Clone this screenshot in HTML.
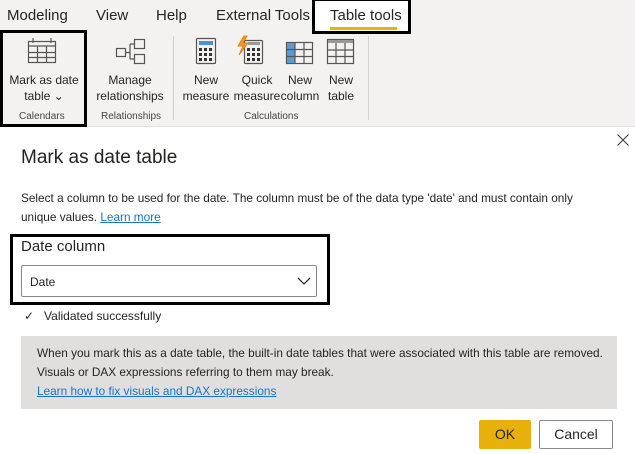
<!DOCTYPE html><html><head><style>
body{margin:0;width:635px;height:454px;position:relative;overflow:hidden;background:#fff;font-family:"Liberation Sans",sans-serif;color:#252423}
.a{position:absolute;white-space:nowrap}
.rib{position:absolute;left:0;top:0;width:635px;height:126px;background:#f3f2f1;border-bottom:1px solid #e1dfdd}
.tab{font-size:15px;top:7px;color:#252423}
.lbl{font-size:12px;text-align:center;line-height:16px}
.grp{font-size:10px;color:#444;top:111px}
</style></head><body>
<div class="rib"></div>
<div class="a tab" style="left:7px">Modeling</div>
<div class="a tab" style="left:96px">View</div>
<div class="a tab" style="left:156px">Help</div>
<div class="a tab" style="left:216px">External Tools</div>
<div class="a" style="left:312px;top:-2px;width:99px;height:36px;border:3px solid #000;background:#fff;box-sizing:border-box"></div>
<div class="a tab" style="left:330px">Table tools</div>
<div class="a" style="left:330px;top:27px;width:67px;height:3px;background:#e8b00a"></div>
<div class="a" style="left:0;top:30px;width:87px;height:97px;border:3px solid #000;box-sizing:border-box"></div>
<div class="a" style="left:173px;top:36px;width:1px;height:84px;background:#d2d0ce"></div>
<div class="a" style="left:368px;top:36px;width:1px;height:84px;background:#d2d0ce"></div>
<svg class="a" style="left:0;top:30px" width="380" height="40" fill="none" stroke="#555" stroke-width="1.2">
<rect x="28.5" y="11.5" width="27" height="21"/><line x1="28" y1="16" x2="56" y2="16"/><line x1="37.5" y1="16" x2="37.5" y2="33"/><line x1="46.5" y1="16" x2="46.5" y2="33"/><line x1="28" y1="22.5" x2="56" y2="22.5"/><line x1="28" y1="27.5" x2="56" y2="27.5"/><line x1="33" y1="8" x2="33" y2="13"/><line x1="51" y1="8" x2="51" y2="13"/>
<rect x="116.5" y="18.5" width="9" height="8"/><rect x="134.5" y="9.5" width="10" height="9"/><rect x="134.5" y="24.5" width="10" height="9"/><path d="M126 22.5h4M130 14v15M130 14h4M130 29h4"/>
<rect x="196.5" y="8.5" width="19" height="25" rx="1"/><rect x="199" y="11" width="14" height="4" fill="#4a90d9" stroke="none"/>
<g fill="#333" stroke="none"><rect x="199" y="18" width="3" height="3"/><rect x="204" y="18" width="3" height="3"/><rect x="209" y="18" width="3" height="3"/><rect x="199" y="23" width="3" height="3"/><rect x="204" y="23" width="3" height="3"/><rect x="209" y="23" width="3" height="3"/><rect x="199" y="28" width="3" height="3"/><rect x="204" y="28" width="3" height="3"/><rect x="209" y="28" width="3" height="3"/>
<rect x="247" y="18" width="3" height="3"/><rect x="252" y="18" width="3" height="3"/><rect x="257" y="18" width="3" height="3"/><rect x="247" y="23" width="3" height="3"/><rect x="252" y="23" width="3" height="3"/><rect x="257" y="23" width="3" height="3"/><rect x="247" y="28" width="3" height="3"/><rect x="252" y="28" width="3" height="3"/><rect x="257" y="28" width="3" height="3"/></g>
<rect x="244.5" y="10.5" width="18" height="23" rx="1"/><rect x="248" y="12" width="12" height="3" fill="#999" stroke="none"/>
<path d="M244 6l-6 10h5l-4 9 9-12h-5l4-7z" fill="#f0a020" stroke="#e07000" stroke-width=".8"/>
<rect x="286.5" y="12.5" width="26" height="21"/><rect x="287" y="13" width="8" height="20" fill="#5b9bd5" stroke="none"/><line x1="295" y1="13" x2="295" y2="33"/><line x1="304" y1="13" x2="304" y2="33"/><line x1="286" y1="19.5" x2="313" y2="19.5"/><line x1="286" y1="26.5" x2="313" y2="26.5"/>
<rect x="327.5" y="9.5" width="26" height="24"/><rect x="328" y="10" width="25" height="3" fill="#999" stroke="none"/><line x1="336" y1="13" x2="336" y2="33"/><line x1="345" y1="13" x2="345" y2="33"/><line x1="327" y1="20" x2="354" y2="20"/><line x1="327" y1="26.5" x2="354" y2="26.5"/>
</svg>
<div class="a lbl" style="left:2px;top:72px;width:84px">Mark as date<br>table ⌄</div>
<div class="a lbl" style="left:92px;top:72px;width:76px">Manage<br>relationships</div>
<div class="a lbl" style="left:180px;top:72px;width:52px">New<br>measure</div>
<div class="a lbl" style="left:232px;top:72px;width:50px">Quick<br>measure</div>
<div class="a lbl" style="left:280px;top:72px;width:40px">New<br>column</div>
<div class="a lbl" style="left:322px;top:72px;width:38px">New<br>table</div>
<div class="a grp" style="left:19px">Calendars</div>
<div class="a grp" style="left:101px">Relationships</div>
<div class="a grp" style="left:244px">Calculations</div>
<svg class="a" style="left:617px;top:134px" width="12" height="12"><path d="M0.5 0.5l11 11M11.5 0.5l-11 11" stroke="#444" stroke-width="1.2"/></svg>
<div class="a" style="left:21px;top:147px;font-size:19px">Mark as date table</div>
<div class="a" style="left:21px;top:189px;font-size:11.8px;line-height:19px">Select a column to be used for the date. The column must be of the data type 'date' and must contain only<br>unique values. <span style="color:#1a73c7;text-decoration:underline">Learn more</span></div>
<div class="a" style="left:10px;top:234px;width:320px;height:71px;border:3px solid #000;box-sizing:border-box"></div>
<div class="a" style="left:21px;top:238px;font-size:15px">Date column</div>
<div class="a" style="left:21px;top:265px;width:296px;height:32px;border:1px solid #8a8886;border-radius:2px;box-sizing:border-box"></div>
<div class="a" style="left:30px;top:275px;font-size:12px">Date</div>
<svg class="a" style="left:297px;top:276px" width="14" height="10"><path d="M1 2l6 6 6-6" fill="none" stroke="#333" stroke-width="1.3"/></svg>
<div class="a" style="left:24px;top:309px;font-size:12px">✓&nbsp;&nbsp; Validated successfully</div>
<div class="a" style="left:21px;top:336px;width:596px;height:73px;background:#e1dfdd"></div>
<div class="a" style="left:37px;top:344px;font-size:11.8px;line-height:19px">When you mark this as a date table, the built-in date tables that were associated with this table are removed.<br>Visuals or DAX expressions referring to them may break.</div>
<div class="a" style="left:37px;top:384px;font-size:11.8px;color:#1a73c7;text-decoration:underline">Learn how to fix visuals and DAX expressions</div>
<div class="a" style="left:479px;top:420px;width:52px;height:29px;background:#e8b00a;border-radius:2px;font-size:14px;text-align:center;line-height:29px">OK</div>
<div class="a" style="left:539px;top:420px;width:74px;height:29px;border:1px solid #8a8886;border-radius:2px;box-sizing:border-box;font-size:14px;text-align:center;line-height:27px">Cancel</div>
</body></html>
